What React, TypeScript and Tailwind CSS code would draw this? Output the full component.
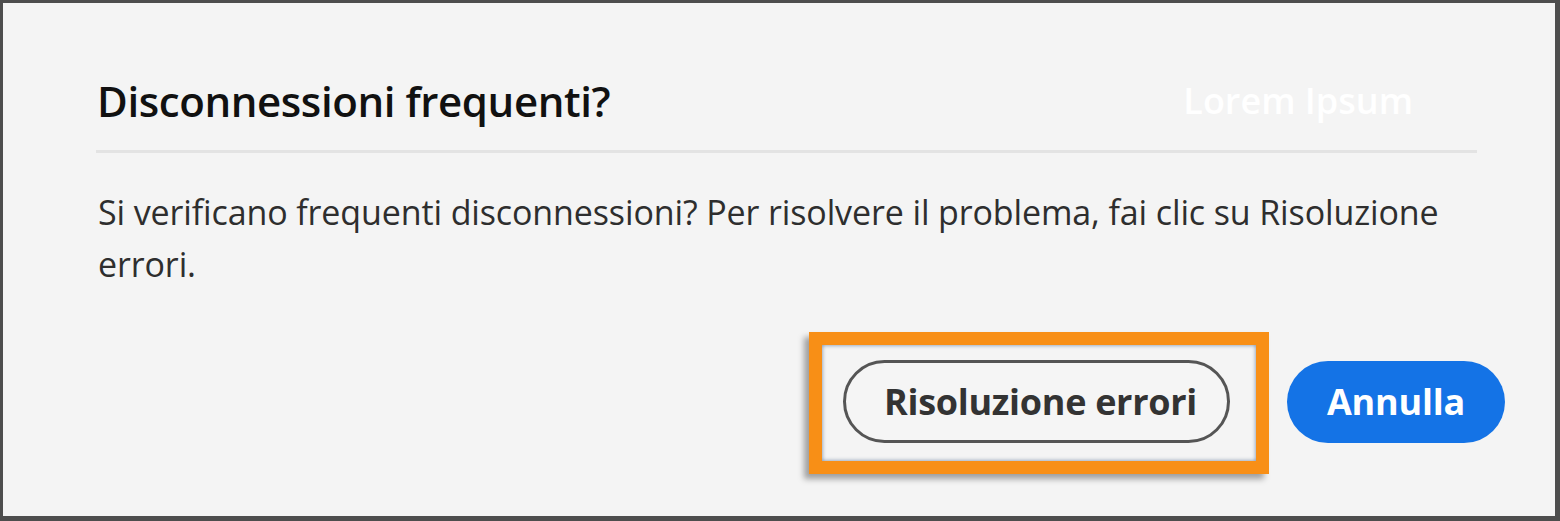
import React from 'react';

export default function App() {
  return (
    <div
      className="w-[1560px] h-[521px] bg-[#4d4d4d] pt-[3px] pl-[3px] pr-[5px] pb-[5px]"
      style={{ fontFamily: '"Open Sans", "Noto Sans", sans-serif' }}
    >
      <div className="h-full bg-[#f4f4f4] flex flex-col">
        {/* Header */}
        <div className="flex items-end w-[1382px] ml-[94px] mt-[72px] h-[52px]">
          <h1 className="text-[42px] leading-[52px] font-semibold text-[#111] tracking-[-0.4px]">
            Disconnessioni frequenti?
          </h1>
          <span className="ml-auto mr-[66px] text-[36px] leading-[52px] font-semibold text-white">
            Lorem Ipsum
          </span>
        </div>
        <div className="ml-[93px] mt-[23px] w-[1381px] h-[3px] bg-[#e3e3e3]" />

        {/* Body */}
        <p className="ml-[95px] mt-[33px] w-[1400px] text-[34px] leading-[52px] text-[#2e2e2e] tracking-[-0.12px]">
          Si verificano frequenti disconnessioni? Per risolvere il problema, fai clic su Risoluzione errori.
        </p>

        {/* Actions */}
        <div className="flex justify-end items-center gap-[57px] mt-auto mb-[73px] pr-[50px]">
          <div className="relative">
            <span className="absolute left-[-34px] top-[-28px] right-[-39px] bottom-[-31px] border-[13px] border-[#f88f16] shadow-[-5px_5px_6px_rgba(0,0,0,0.35),inset_0_0_4px_rgba(60,90,130,0.7)]" />
            <button className="relative w-[387px] h-[83px] pl-[8px] rounded-full border-[3px] border-[#555] bg-[#f5f5f5] text-[36px] font-bold text-[#333] tracking-[-0.3px]">
              Risoluzione errori
            </button>
          </div>
          <button className="w-[218px] h-[82px] rounded-full bg-[#1473e6] text-[36px] font-bold text-white tracking-[-0.2px]">
            Annulla
          </button>
        </div>
      </div>
    </div>
  );
}
